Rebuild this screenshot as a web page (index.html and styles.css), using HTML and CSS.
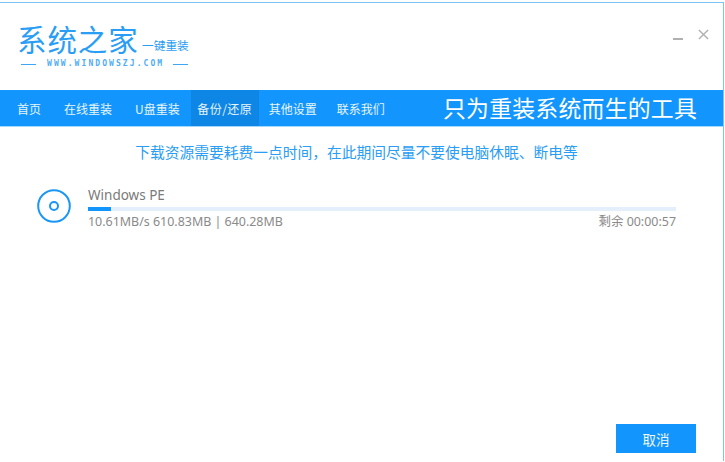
FILE: index.html
```html
<!DOCTYPE html>
<html lang="zh">
<head>
<meta charset="utf-8">
<title>系统之家一键重装</title>
<link rel="stylesheet" href="styles.css">
</head>
<body>
<div class="window">
  <header class="header">
    <div class="logo">
      <div class="logo-top">
        <span class="logo-name">系统之家</span>
        <span class="logo-sub">一键重装</span>
      </div>
      <div class="logo-url">
        <i class="dash"></i>
        <span>WWW.WINDOWSZJ.COM</span>
        <i class="dash"></i>
      </div>
    </div>
    <div class="win-controls">
      <i class="minimize"></i>
      <svg class="close" viewBox="0 0 12 12" width="11" height="11"><path d="M1 1L11 11M11 1L1 11" stroke="#b0b0b0" stroke-width="1.5" fill="none"/></svg>
    </div>
  </header>
  <nav class="nav">
    <a class="nav-item first">首页</a>
    <a class="nav-item">在线重装</a>
    <a class="nav-item upan">U盘重装</a>
    <a class="nav-item active">备份/还原</a>
    <a class="nav-item">其他设置</a>
    <a class="nav-item">联系我们</a>
    <span class="slogan">只为重装系统而生的工具</span>
  </nav>
  <main class="main">
    <p class="notice">下载资源需要耗费一点时间，在此期间尽量不要使电脑休眠、断电等</p>
    <div class="task">
      <svg class="disc" viewBox="0 0 34 34" width="34" height="34">
        <circle cx="17" cy="17" r="15.8" fill="none" stroke="#1a96f5" stroke-width="2"/>
        <circle cx="17" cy="17" r="4" fill="none" stroke="#1a96f5" stroke-width="2"/>
      </svg>
      <div class="task-body">
        <div class="task-name">Windows PE</div>
        <div class="bar"><div class="bar-fill" style="width:3.9%"></div></div>
        <div class="task-meta">
          <span>10.61MB/s 610.83MB | 640.28MB</span>
          <span>剩余 00:00:57</span>
        </div>
      </div>
    </div>
    <div class="actions"><button class="cancel">取消</button></div>
  </main>
</div>
</body>
</html>
```
FILE: styles.css
```css
* { box-sizing: border-box; }
html, body { margin: 0; height: 100%; background: #fff; }
body {
  padding-top: 2px;
  padding-right: 1px;
  font-family: "Noto Sans CJK SC", "Liberation Sans", sans-serif;
}
.window {
  height: 459px;
  border-top: 1px solid #7cc3f7;
  border-right: 1px solid #7cc3f7;
  display: flex;
  flex-direction: column;
}
.header {
  height: 87px;
  display: flex;
  justify-content: space-between;
  padding: 18px 14px 0 17px;
}
.logo { width: 173px; }
.logo-top { display: flex; align-items: flex-end; height: 34px; }
.logo-name {
  font-size: 29.5px;
  line-height: 34px;
  letter-spacing: 0.9px;
  color: #2a9df4;
  white-space: nowrap;
  width: 125px;
}
.logo-sub {
  font-size: 11.7px;
  line-height: 14px;
  color: #2a9df4;
  white-space: nowrap;
  margin-bottom: 3px;
}
.logo-url {
  display: flex;
  align-items: center;
  margin-top: 3px;
  padding-left: 4px;
  color: #4fadf6;
  font: bold 8px/12px "DejaVu Sans Mono", monospace;
  letter-spacing: 2.08px;
  white-space: nowrap;
}
.dash { width: 15px; height: 1px; background: #3ea6f5; display: block; flex: none; }
.logo-url span { margin: 0 9px 0 11px; }
.win-controls { display: flex; align-items: flex-start; gap: 15px; height: 26px; padding-top: 6px; }
.minimize { width: 10px; height: 1.5px; background: #b0b0b0; display: block; margin-top: 11px; }
.close { display: block; margin-top: 2px; }
.nav {
  height: 37px;
  flex: none;
  background: #1296fe;
  border-bottom: 1px solid #a5d6fb;
  display: flex;
  align-items: stretch;
  color: #e8f5ff;
  font-size: 12px;
}
.nav-item {
  display: flex;
  align-items: center;
  padding: 0 10px;
  white-space: nowrap;
}
.nav-item.first { padding-left: 17px; padding-right: 13px; }
.nav-item.upan { padding-left: 13px; padding-right: 11px; }
.nav-item.active {
  background: #0e86e6;
  width: 68px;
  padding: 0;
  justify-content: center;
  letter-spacing: 0.4px;
}
.slogan {
  margin-left: auto;
  margin-right: 26px;
  font-size: 22.9px;
  line-height: 35px;
  color: #fff;
  letter-spacing: 0.2px;
}
.main { flex: 1; display: flex; flex-direction: column; padding: 0 47px 0 37px; }
.notice {
  margin: 15px 0 0;
  font-size: 14.75px;
  line-height: 20px;
  text-align: center;
  color: #2a9df4;
  white-space: nowrap;
}
.task { display: flex; align-items: flex-start; gap: 17px; margin-top: 24px; }
.disc { flex: none; margin-top: 3px; }
.task-body { flex: 1; }
.task-name { font: 13.5px/18px "Noto Sans", "Noto Sans CJK SC", sans-serif; color: #7a7a7a; }
.bar { height: 4px; background: #e4effb; margin-top: 3px; }
.bar-fill { height: 100%; background: #1296fe; }
.task-meta {
  display: flex;
  justify-content: space-between;
  margin-top: 2px;
  font: 12.45px/18px "Noto Sans", "Noto Sans CJK SC", sans-serif;
  color: #8a8a8a;
}
.actions { margin-top: auto; margin-right: -20px; margin-bottom: 8px; display: flex; justify-content: flex-end; }
.cancel {
  width: 80px;
  height: 29px;
  border: 0;
  padding: 0;
  background: #1296fe;
  color: #eef8ff;
  font: 13.5px "Noto Sans CJK SC", sans-serif;
}
```
